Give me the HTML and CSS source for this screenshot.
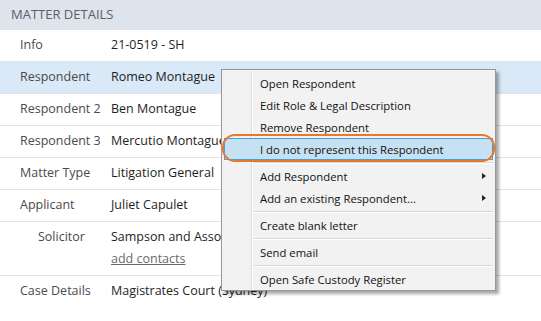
FILE: index.html
```html
<html>
    <head>
        <title>Matter Details</title>
        <link rel="stylesheet" href="styles.css">
    </head>
    <body>
        <div class="panel">
            <div class="panel_header">MATTER DETAILS</div>

            <div class="row">
                <div class="label">Info</div>
                <div class="value">21-0519 - SH</div>
            </div>
            <div class="row selected">
                <div class="label">Respondent</div>
                <div class="value">Romeo Montague</div>
            </div>
            <div class="row">
                <div class="label">Respondent 2</div>
                <div class="value">Ben Montague</div>
            </div>
            <div class="row">
                <div class="label">Respondent 3</div>
                <div class="value">Mercutio Montague</div>
            </div>
            <div class="row">
                <div class="label">Matter Type</div>
                <div class="value">Litigation General</div>
            </div>
            <div class="row">
                <div class="label">Applicant</div>
                <div class="value">Juliet Capulet</div>
            </div>
            <div class="row two_line">
                <div class="label sub_label">Solicitor</div>
                <div class="value">
                    <div>Sampson and Associates</div>
                    <a class="add_link" href="#">add contacts</a>
                </div>
            </div>
            <div class="row last">
                <div class="label">Case Details</div>
                <div class="value">Magistrates Court (Sydney)</div>
            </div>
        </div>

        <div class="context_menu">
            <div class="menu_item">Open Respondent</div>
            <div class="menu_item">Edit Role &amp; Legal Description</div>
            <div class="menu_item">Remove Respondent</div>
            <div class="menu_item hover">I do not represent this Respondent</div>
            <div class="menu_sep"></div>
            <div class="menu_item">Add Respondent <span class="arrow"></span></div>
            <div class="menu_item">Add an existing Respondent... <span class="arrow"></span></div>
            <div class="menu_sep"></div>
            <div class="menu_item">Create blank letter</div>
            <div class="menu_sep"></div>
            <div class="menu_item">Send email</div>
            <div class="menu_sep"></div>
            <div class="menu_item">Open Safe Custody Register</div>

            <div class="callout"></div>
        </div>
    </body>
</html>
```

FILE: styles.css
```css
body {
    margin: 0;
    background: #ffffff;
    font-family: "Open Sans", "Noto Sans", sans-serif;
    color: #1e1e1e;
}

.panel_header {
    height: 30px;
    line-height: 29px;
    padding-left: 11px;
    background: #dde4eb;
    color: #5a6066;
    font-size: 13px;
}

.row {
    display: grid;
    grid-template-columns: 91px 1fr;
    padding: 4px 0 5px 20px;
    line-height: 22px;
    font-size: 12.5px;
    border-bottom: 1px solid #e3e3e3;
}

.row.two_line {
    padding-bottom: 6px;
    line-height: 21.5px;
}

.row.selected {
    background: #d9e9f7;
}

.row.last {
    border-bottom: none;
}

.label {
    color: #4a4a4a;
}

.sub_label {
    padding-left: 18px;
}

.value {
    color: #1e1e1e;
    white-space: nowrap;
}

.add_link {
    color: #6a6a6a;
    text-decoration: underline;
}

/* context menu */
.context_menu {
    position: absolute;
    left: 221px;
    top: 69px;
    width: 273px;
    padding: 2px 0 0 0;
    background: #f2f2f2;
    border: 1px solid #979797;
    box-shadow: 3px 3px 3px rgba(0, 0, 0, 0.35);
    font-size: 11.3px;
}

.context_menu::before {
    content: "";
    position: absolute;
    left: 29px;
    top: 2px;
    bottom: 1px;
    width: 1px;
    background: #dcdcdc;
    border-right: 1px solid #ffffff;
}

.menu_item {
    display: flex;
    align-items: center;
    height: 22px;
    margin: 0 2px;
    padding: 0 6px 0 35px;
    border: 1px solid transparent;
    box-sizing: border-box;
    color: #111111;
    position: relative;
}

.menu_item.hover {
    background: #c5e1f2;
    border-color: #45a0d8;
}

.arrow {
    margin-left: auto;
    width: 0;
    height: 0;
    border-left: 4px solid #222222;
    border-top: 3.5px solid transparent;
    border-bottom: 3.5px solid transparent;
}

.menu_sep {
    height: 1px;
    margin: 2px 2px 1px 32px;
    background: #d7d7d7;
    border-bottom: 1px solid #ffffff;
}

.callout {
    position: absolute;
    left: 0;
    top: 64px;
    width: 269px;
    height: 24px;
    border: 2px solid #e8792b;
    border-radius: 13px;
}
```
